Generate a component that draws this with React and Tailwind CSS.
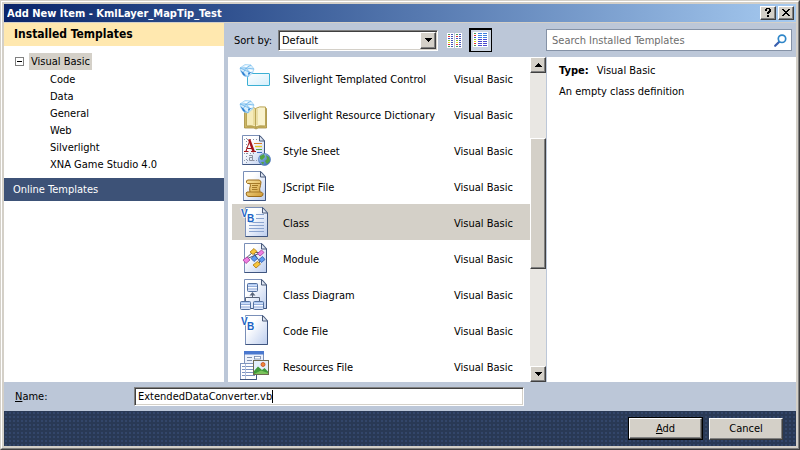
import { useState } from "react";

const RAISED =
  "border border-t-white border-l-white border-r-[#404040] border-b-[#404040] bg-[#d4d0c8] shadow-[inset_-1px_-1px_0_#808080]";
const SUNKEN =
  "border border-t-[#808080] border-l-[#808080] border-r-white border-b-white bg-white shadow-[inset_1px_1px_0_#404040,inset_-1px_-1px_0_#d4d0c8]";

function Defs() {
  return (
    <svg width="0" height="0" className="absolute" aria-hidden="true">
      <defs>
        <linearGradient id="paper" x1="0" y1="0" x2="1" y2="1">
          <stop offset="0.3" stopColor="#ffffff" />
          <stop offset="1" stopColor="#bccdee" />
        </linearGradient>
        <linearGradient id="gold" x1="0" y1="0" x2="1" y2="1">
          <stop offset="0" stopColor="#fbe6a0" />
          <stop offset="1" stopColor="#cf9a35" />
        </linearGradient>
        <linearGradient id="sea" x1="0" y1="0" x2="1" y2="1">
          <stop offset="0" stopColor="#a9cdf6" />
          <stop offset="1" stopColor="#2c5fae" />
        </linearGradient>
        <linearGradient id="glass" x1="0" y1="0" x2="1" y2="1">
          <stop offset="0" stopColor="#ffffff" />
          <stop offset="1" stopColor="#d3eefb" />
        </linearGradient>
        <linearGradient id="box" x1="0" y1="0" x2="0" y2="1">
          <stop offset="0" stopColor="#8fb4ee" />
          <stop offset="0.45" stopColor="#ffffff" />
          <stop offset="1" stopColor="#cfdcf5" />
        </linearGradient>
      </defs>
    </svg>
  );
}

function Icon({ children }) {
  return (
    <svg width="32" height="32" viewBox="0 0 32 32" aria-hidden="true">
      {children}
    </svg>
  );
}

function Page({ x = 5 }) {
  return (
    <g transform={`translate(${x} 0)`}>
      <path d="M0.5 0.5H18L22.5 5.5V29.5H0.5Z" fill="url(#paper)" stroke="#7a8fb8" />
      <path d="M22.5 6V29.5H0.5" fill="none" stroke="#3f557f" />
      <path d="M17.5 0.5V6H22.5Z" fill="#dfe6f3" stroke="#4a5a78" />
    </g>
  );
}

function SilverlightMark() {
  return (
    <g>
      <path d="M1 5L6 1.5L12 2L15 6L13.5 10L9 14L5 13L2 9Z" fill="#d9effd" stroke="#9fd2f4" strokeWidth="0.8" />
      <path d="M1 5L7 5L12 2M7 5L15 6M7 5L4 10L9 14M7 5L10 9L13.5 10M1 5L10 9L9 14" fill="none" stroke="#6bb4ea" strokeWidth="0.8" />
      <path d="M5 3L9 2.5L7.5 4.5ZM10 6.5L14 7L11.5 9Z" fill="#ffffff" />
      <path d="M1.5 7L5 10L7 13.5L4 12ZM9 10L12 9L10 12Z" fill="#2f7fd0" />
    </g>
  );
}

function VbLetters() {
  return (
    <g fill="#1a62c4" stroke="#ffffff" strokeWidth="1.2" paintOrder="stroke" fontFamily="'Liberation Sans', Arial, sans-serif" fontWeight="bold" fontSize="10">
      <text x="2" y="10">V</text>
      <text x="8" y="15">B</text>
    </g>
  );
}

function TemplatedControlIcon() {
  return (
    <Icon>
      <rect x="8.5" y="10.5" width="22" height="12" rx="0.5" fill="url(#glass)" stroke="#3bb0d4" />
      <SilverlightMark />
    </Icon>
  );
}

function DictionaryIcon() {
  return (
    <Icon>
      <path d="M5.5 9.5H8V27H15.5L17 29L18.5 27H25.5V9.5H27.5V29H19L17 30L15 29H5.5Z" fill="#cdb765" stroke="#a38c3d" strokeWidth="0.8" />
      <path d="M7.5 8Q13 7 16.5 9.5V28Q13 26 7.5 27Z" fill="#f6ecbb" stroke="#baa556" />
      <path d="M26.5 8Q20 7 16.5 9.5V28Q20 26 26.5 27Z" fill="#f9f2cd" stroke="#baa556" />
      <path d="M15 10V26M18 10V26" stroke="#dccb82" />
      <SilverlightMark />
    </Icon>
  );
}

function StyleSheetIcon() {
  return (
    <Icon>
      <Page x={3} />
      <path d="M7.5 3V28M5 4.5H19M5 18.5H16M5 25.5H18" stroke="#8b95a8" strokeDasharray="1 2" fill="none" />
      <g strokeLinecap="square">
        <path d="M5.5 16.5H9M12.5 16.5H16.5M8.5 13.5H12.5" stroke="#a3151b" fill="none" />
        <path d="M7 16L10.5 6.5" stroke="#a3151b" fill="none" />
        <path d="M10.5 5.5L14.5 16" stroke="#a3151b" strokeWidth="2.4" fill="none" />
        <path d="M10.5 20.5H13.5V25.5H15M13 22.5H10.5V25.5H13" stroke="#8a8f9c" fill="none" />
      </g>
      <path d="M15 8.5H23" stroke="#d97a2c" />
      <path d="M16 11.5H23" stroke="#e8c928" strokeWidth="1.4" />
      <path d="M17 14.5H23" stroke="#52a447" />
      <path d="M18 17.5H23" stroke="#3b68c0" />
      <circle cx="25.5" cy="24.5" r="6" fill="url(#sea)" stroke="#4a74b4" strokeWidth="0.7" />
      <path d="M21 21L25 19L26 22L23 25L21 24ZM27 20L30 22L31 26L28 29L26 26L28 24ZM22 27L25 27L24 30Z" fill="#52a342" />
    </Icon>
  );
}

function ScriptIcon() {
  return (
    <Icon>
      <Page x={4} />
      <path d="M9 9Q7 9 7.5 11.5Q8 13 10.5 12.5L11.5 14Q10 18 11 21H8Q6.5 21.5 7.5 24Q8 25.5 10 25.5H22Q24.5 25 24 22.5Q23.5 21 21 21Q20 18 21.5 14.5Q23 10 20.5 9Z" fill="url(#gold)" stroke="#9a6b1c" />
      <path d="M10 12.5H21M11 21H21M13 14.5H19M13 16.5H18M13 18.5H18.5" stroke="#9c701f" fill="none" strokeWidth="0.9" />
    </Icon>
  );
}

function ClassIcon() {
  return (
    <Icon>
      <Page x={6} />
      <path d="M17 7.5H25M17 11.5H25M10 15.5H25M10 18.5H25M10 21.5H25M10 24.5H25" stroke="#8ba4cf" />
      <VbLetters />
    </Icon>
  );
}

function ModuleIcon() {
  return (
    <Icon>
      <Page x={5} />
      <path d="M5 17L14 9L22 10M14 9L21 19L16 22M5 17L12 14L21 10" stroke="#49536b" fill="none" />
      <g strokeWidth="0.8">
        <path d="M11 9L15 5.5L18 8.5L14 11.5Z" fill="#f8c53a" stroke="#a97713" />
        <path d="M18.5 10.5L22.5 7L25 9.5L21 13Z" fill="#f07fe3" stroke="#a83b9c" />
        <path d="M4 17L8 14L11 17L7 20.5Z" fill="#f07fe3" stroke="#a83b9c" />
        <path d="M12 15.5L15.5 12.5L18.5 15.5L15 18.5Z" fill="#5f9cf2" stroke="#2b59a8" />
        <path d="M20 16.5L23.5 13.5L26 16.5L22.5 19.5Z" fill="#5f9cf2" stroke="#2b59a8" />
        <path d="M14 22L18.5 18.5L21.5 21L17 25Z" fill="#f8c53a" stroke="#a97713" />
      </g>
    </Icon>
  );
}

function DiagramBox({ x, y }) {
  return (
    <g transform={`translate(${x} ${y})`}>
      <rect x="0.5" y="0.5" width="10" height="8" rx="1" fill="url(#box)" stroke="#54719f" />
      <path d="M1 3.5H10M1 6H10" stroke="#7c9bd2" strokeWidth="0.8" />
    </g>
  );
}

function DiagramIcon() {
  return (
    <Icon>
      <Page x={5} />
      <path d="M13.5 14V18.5M6.5 22V18.5H20.5V22" stroke="#59647a" fill="none" />
      <path d="M10.5 16.5L13.5 13L16.5 16.5Z" fill="#59647a" />
      <DiagramBox x={8} y={4} />
      <DiagramBox x={1} y={22} />
      <DiagramBox x={14} y={22} />
    </Icon>
  );
}

function CodeFileIcon() {
  return (
    <Icon>
      <Page x={6} />
      <VbLetters />
    </Icon>
  );
}

function ResourcesIcon() {
  return (
    <Icon>
      <rect x="5.5" y="0.5" width="19" height="19" fill="#eef2fb" stroke="#7f93bb" />
      <path d="M5 0H25V3.5H5Z" fill="#4a78cf" />
      <path d="M8 6.5H13M8 9.5H13" stroke="#7f8fae" />
      <rect x="15.5" y="5.5" width="6" height="2.5" fill="#fff" stroke="#6f84ad" strokeWidth="0.8" />
      <rect x="1.5" y="12.5" width="16" height="16" fill="#ffffff" stroke="#8095bd" />
      <path d="M3 15.5H16M3 18.5H16M3 21.5H16M3 24.5H16" stroke="#7c93c2" />
      <path d="M6.5 13V28" stroke="#b0bfdc" />
      <path d="M17.5 13V28.5H1" stroke="#3f557f" fill="none" />
      <rect x="14.5" y="9.5" width="15" height="14" fill="#e3effc" stroke="#6d6a52" />
      <path d="M15 23V20L19 15.5L23 19L25.5 17L29 20.5V23Z" fill="#3f9a3a" />
      <path d="M15 23L22 19.5L29 22V23Z" fill="#7cc35c" />
      <circle cx="24" cy="13.5" r="2" fill="#f08a3a" stroke="#c4481e" strokeWidth="0.8" />
    </Icon>
  );
}

const TEMPLATES = [
  ["Silverlight Templated Control", TemplatedControlIcon],
  ["Silverlight Resource Dictionary", DictionaryIcon],
  ["Style Sheet", StyleSheetIcon],
  ["JScript File", ScriptIcon],
  ["Class", ClassIcon],
  ["Module", ModuleIcon],
  ["Class Diagram", DiagramIcon],
  ["Code File", CodeFileIcon],
  ["Resources File", ResourcesIcon],
];

const CATEGORIES = ["Code", "Data", "General", "Web", "Silverlight", "XNA Game Studio 4.0"];

const DOTS = ["#4a9a5a", "#e03030", "#4a58c0", "#8ac832", "#e8d820", "#e03030", "#4a9a5a"];

function ListGlyph({ wide }) {
  return (
    <svg width="15" height="15" viewBox="0 0 15 15" aria-hidden="true" shapeRendering="crispEdges" className="shrink-0">
      <path d={wide ? "M0 0H15V15H0Z" : "M0 0H7V15H0ZM8 0H15V15H8Z"} fill="#ffffff" />
      {DOTS.map((color, i) => (
        <g key={i}>
          <rect x="1" y={1 + i * 2} width="2" height="1" fill={color} />
          {wide ? (
            <g fill={i < 3 ? "#3f80e0" : "#4a4ad0"}>
              <rect x="5" y={1 + i * 2} width="4" height="1" />
              <rect x="10" y={1 + i * 2} width="4" height="1" />
            </g>
          ) : (
            <g>
              <rect x="4" y={1 + i * 2} width="2" height="1" fill="#4858b8" />
              <rect x="9" y={1 + i * 2} width="2" height="1" fill={color} />
              <rect x="12" y={1 + i * 2} width="2" height="1" fill="#4858b8" />
            </g>
          )}
        </g>
      ))}
    </svg>
  );
}

function Arrow({ up }) {
  return (
    <svg width="7" height="4" viewBox="0 0 7 4" aria-hidden="true" shapeRendering="crispEdges">
      <path d={up ? "M3 0H4V1H5V2H6V3H7V4H0V3H1V2H2V1H3Z" : "M0 0H7V1H6V2H5V3H4V4H3V3H2V2H1V1H0Z"} fill="#000" />
    </svg>
  );
}

function TitleBar() {
  return (
    <header className="flex h-[19px] shrink-0 items-center border-b border-[#d4d0c8] bg-linear-to-r from-[#0a246a] to-[#a6caf0] pr-[2px] pl-[3px]">
      <h1 className="flex-1 truncate font-bold text-white">Add New Item - KmlLayer_MapTip_Test</h1>
      <div className="flex gap-[2px]">
        <button type="button" aria-label="Help" className={`flex h-[14px] w-4 items-center justify-center ${RAISED}`}>
          <svg width="6" height="10" viewBox="0 0 6 10" aria-hidden="true" shapeRendering="crispEdges">
            <path d="M1 0H5V1H6V4H5V5H4V6H2V4H3V3H4V1H2V3H0V1H1ZM2 7H4V9H2Z" fill="#000" />
          </svg>
        </button>
        <button type="button" aria-label="Close" className={`flex h-[14px] w-4 items-center justify-center ${RAISED}`}>
          <svg width="8" height="8" viewBox="0 0 8 8" aria-hidden="true" shapeRendering="crispEdges">
            <path d="M0 0H2V1H3V2H5V1H6V0H8V1H7V2H6V3H5V4H6V5H7V6H8V7H6V6H5V5H3V6H2V7H0V6H1V5H2V4H3V3H2V2H1V1H0Z" fill="#000" />
          </svg>
        </button>
      </div>
    </header>
  );
}

function Sidebar() {
  return (
    <nav className="w-[220px] shrink-0 bg-white">
      <h2 className="flex h-[23px] items-center bg-[#ffe8af] pl-[10px] text-[12px] font-bold">Installed Templates</h2>
      <div className="pt-[7px] pb-[5px] pl-[11px]">
        <div className="flex h-[17px] items-center gap-[5px]">
          <button type="button" aria-label="Collapse Visual Basic" className="flex h-[9px] w-[9px] items-center justify-center border border-[#808080] bg-white">
            <span className="h-px w-[5px] bg-black" />
          </button>
          <button type="button" className="h-[17px] bg-[#d4d0c8] px-[2px]">Visual Basic</button>
        </div>
        <ul className="mt-px pl-[35px]">
          {CATEGORIES.map((name) => (
            <li key={name} className="h-[17px]">
              <button type="button" className="block h-[17px]">{name}</button>
            </li>
          ))}
        </ul>
      </div>
      <button type="button" className="flex h-[23px] w-full items-center bg-[#3d5277] pl-[9px] text-white">Online Templates</button>
    </nav>
  );
}

function Toolbar() {
  return (
    <div className="flex h-[34px] shrink-0 items-center pl-[6px]">
      <label htmlFor="sort" className="w-11">Sort by:</label>
      <div className={`relative h-[21px] w-[160px] ${SUNKEN}`}>
        <select id="sort" className="block h-full w-full appearance-none bg-transparent pl-[3px] outline-none">
          <option>Default</option>
        </select>
        <span className={`pointer-events-none absolute top-px right-px bottom-px flex w-4 items-center justify-center ${RAISED}`}>
          <Arrow />
        </span>
      </div>
      <button type="button" aria-label="Small icons" className="ml-[9px] h-4">
        <ListGlyph />
      </button>
      <button type="button" aria-label="Medium icons" className="ml-[7px] flex h-[24px] w-[23px] border-t-2 border-r border-b border-l-2 border-black bg-[#ccd5e2] p-[2px]">
        <ListGlyph wide />
      </button>
    </div>
  );
}

function TemplateList() {
  const [selected, setSelected] = useState("Class");
  return (
    <div className="flex min-h-0 flex-1 bg-white">
      <ul className="min-w-0 flex-1 overflow-hidden pt-[3px] pl-1">
        {TEMPLATES.map(([name, Glyph]) => (
          <li key={name}>
            <button
              type="button"
              onClick={() => setSelected(name)}
              className={`grid h-9 w-full grid-cols-[44px_171px_1fr] items-center pt-[2px] pl-[7px] text-left ${selected === name ? "bg-[#d4d0c8]" : ""}`}
            >
              <Glyph />
              <span>{name}</span>
              <span>Visual Basic</span>
            </button>
          </li>
        ))}
      </ul>
      <div className="flex w-4 flex-col bg-[#e9e7e3]">
        <button type="button" aria-label="Scroll up" className={`flex h-4 shrink-0 items-center justify-center ${RAISED}`}>
          <Arrow up />
        </button>
        <div className="flex-[65]" />
        <div className={`flex-[130] ${RAISED}`} />
        <div className="flex-[98]" />
        <button type="button" aria-label="Scroll down" className={`flex h-4 shrink-0 items-center justify-center ${RAISED}`}>
          <Arrow />
        </button>
      </div>
    </div>
  );
}

function Details() {
  return (
    <aside className="flex min-w-0 flex-1 flex-col">
      <div className="flex h-[34px] shrink-0 items-center pr-1">
        <div className="flex h-[22px] flex-1 items-center border border-[#8592a6] bg-white pr-1 pl-[5px]">
          <input type="search" aria-label="Search Installed Templates" placeholder="Search Installed Templates" className="min-w-0 flex-1 bg-transparent outline-none placeholder:text-[#6d6d6d]" />
          <button type="button" aria-label="Search">
            <svg width="13" height="13" viewBox="0 0 13 13" fill="none" aria-hidden="true">
              <path d="M1.2 11.8L5.5 7.5" stroke="#3a5fae" strokeWidth="2.2" strokeLinecap="round" />
              <circle cx="8" cy="4.8" r="3.7" fill="#ffffff" stroke="#2f86c8" strokeWidth="1.7" />
            </svg>
          </button>
        </div>
      </div>
      <div className="ml-px flex-1 bg-white pt-[5px] pl-3">
        <p className="flex h-4 items-center gap-[8px]">
          <strong>Type:</strong>
          <span>Visual Basic</span>
        </p>
        <p className="mt-[5px] flex h-4 items-center">An empty class definition</p>
      </div>
    </aside>
  );
}

export default function App() {
  return (
    <div className="flex h-screen flex-col border border-t-[#d4d0c8] border-r-[#404040] border-b-[#404040] border-l-[#d4d0c8] font-['DejaVu_Sans_Condensed','DejaVu_Sans',sans-serif] text-[11px] leading-[17px] text-black">
      <Defs />
      <div className="flex min-h-0 flex-1 flex-col border border-t-white border-r-[#808080] border-b-[#808080] border-l-white">
        <div className="flex min-h-0 flex-1 flex-col border-2 border-[#d4d0c8]">
          <TitleBar />
          <main className="flex min-h-0 flex-1 bg-[#bcc7d8]">
            <Sidebar />
            <section className="ml-1 flex w-[318px] shrink-0 flex-col">
              <Toolbar />
              <TemplateList />
            </section>
            <Details />
          </main>
          <div className="flex h-[29px] shrink-0 items-center bg-[#bcc7d8] pl-[11px]">
            <label htmlFor="name" className="w-[119px]"><u>N</u>ame:</label>
            <div className={`flex h-[19px] w-[390px] items-center pl-[3px] ${SUNKEN}`}>
              <input id="name" defaultValue="ExtendedDataConverter.vb" className="field-sizing-content bg-transparent p-0 outline-none" />
              <span className="h-[13px] w-px bg-black" />
            </div>
          </div>
          <footer className="flex h-[35px] shrink-0 items-center justify-end gap-[6px] bg-[#293955] bg-[radial-gradient(#33466a_1px,transparent_1px)] bg-size-[4px_4px] pr-[13px]">
            <button type="submit" className="h-[23px] w-[75px] border border-black">
              <span className={`flex h-full items-center justify-center ${RAISED}`}>
                <span><u>A</u>dd</span>
              </span>
            </button>
            <button type="button" className={`h-[22px] w-[74px] ${RAISED}`}>Cancel</button>
          </footer>
        </div>
      </div>
    </div>
  );
}
